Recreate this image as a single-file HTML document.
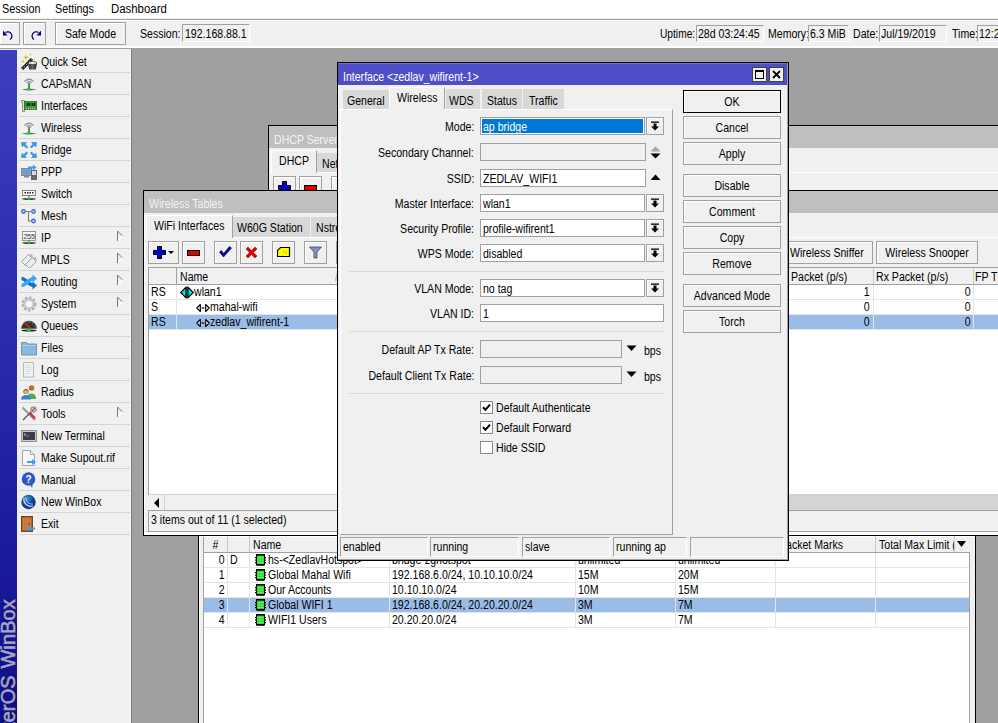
<!DOCTYPE html><html><head><meta charset="utf-8"><style>
html,body{margin:0;padding:0}
body{width:998px;height:723px;overflow:hidden;position:relative;background:#a0a0a0;font-family:"Liberation Sans",sans-serif;font-size:12px;color:#000}
div,span,svg{position:absolute}
.t{white-space:nowrap;line-height:13px;height:13px;transform:scaleX(0.88);transform-origin:0 0}
</style></head><body>
<div style="left:198px;top:520px;width:778px;height:220px;background:#f0f0f0;border-left:1.5px solid #000;border-right:1px solid #000;box-sizing:border-box"></div>
<div style="left:199px;top:536px;width:1px;height:200px;background:#fff"></div>
<div style="left:203px;top:536px;width:767px;height:200px;background:#fff"></div>
<div style="left:203px;top:536px;width:1px;height:200px;background:#a0a0a0"></div>
<div style="left:969px;top:536px;width:1px;height:200px;background:#a0a0a0"></div>
<div style="left:204px;top:536px;width:765px;height:16px;background:#f0f0f0"></div>
<div style="left:204px;top:552px;width:765px;height:1px;background:#a0a0a0"></div>
<div style="left:199px;top:536px;width:776px;height:1px;background:#fff"></div>
<div style="left:227px;top:536px;width:1px;height:16px;background:#c8c8c8"></div>
<div style="left:249px;top:536px;width:1px;height:16px;background:#c8c8c8"></div>
<div style="left:389px;top:536px;width:1px;height:16px;background:#c8c8c8"></div>
<div style="left:575px;top:536px;width:1px;height:16px;background:#c8c8c8"></div>
<div style="left:675px;top:536px;width:1px;height:16px;background:#c8c8c8"></div>
<div style="left:775px;top:536px;width:1px;height:16px;background:#c8c8c8"></div>
<div style="left:875px;top:536px;width:1px;height:16px;background:#c8c8c8"></div>
<div style="left:954px;top:536px;width:1px;height:16px;background:#c8c8c8"></div>
<span class="t" style="left:204px;width:23px;text-align:center;top:539px;transform-origin:50% 0;">#</span>
<span class="t" style="left:253px;top:539px;">Name</span>
<span class="t" style="left:779px;top:539px;">Packet Marks</span>
<span class="t" style="left:879px;top:539px;">Total Max Limit (</span>
<div style="left:954px;top:537px;width:15px;height:15px;background:#f0f0f0;border-left:1px solid #c8c8c8"></div>
<svg style="left:956px;top:540px" width="11" height="8" viewBox="0 0 11 8"><path d="M1 1 h9 l-4.5 6z" fill="#000"/></svg>
<div style="left:204px;top:567px;width:765px;height:1px;background:#e4e4e4"></div>
<div style="left:227px;top:553px;width:1px;height:15px;background:#e4e4e4"></div>
<div style="left:249px;top:553px;width:1px;height:15px;background:#e4e4e4"></div>
<div style="left:389px;top:553px;width:1px;height:15px;background:#e4e4e4"></div>
<div style="left:575px;top:553px;width:1px;height:15px;background:#e4e4e4"></div>
<div style="left:675px;top:553px;width:1px;height:15px;background:#e4e4e4"></div>
<div style="left:775px;top:553px;width:1px;height:15px;background:#e4e4e4"></div>
<div style="left:875px;top:553px;width:1px;height:15px;background:#e4e4e4"></div>
<span class="t" style="right:773px;top:554px;transform-origin:100% 0;">0</span>
<span class="t" style="left:230px;top:554px;">D</span>
<svg style="left:255px;top:554px" width="11" height="12" viewBox="0 0 11 12"><rect x="1.5" y="0.5" width="8" height="10.5" fill="#20e020" stroke="#000" stroke-width="1"/><rect x="2" y="0" width="7" height="1.6" fill="#000"/><rect x="2" y="10" width="7" height="1.6" fill="#000"/><g fill="#000"><rect x="0" y="3" width="2" height="1.2"/><rect x="0" y="5.5" width="2" height="1.2"/><rect x="0" y="8" width="2" height="1.2"/><rect x="9" y="3" width="2" height="1.2"/><rect x="9" y="5.5" width="2" height="1.2"/><rect x="9" y="8" width="2" height="1.2"/></g><path d="M2.5 3.6h6M2.5 6.1h6M2.5 8.6h6" stroke="#90f090" stroke-width="0.8"/></svg>
<span class="t" style="left:268px;top:554px;">hs-&lt;ZedlavHotspot&gt;</span>
<span class="t" style="left:392px;top:554px;">bridge-zghotspot</span>
<span class="t" style="left:578px;top:554px;">unlimited</span>
<span class="t" style="left:678px;top:554px;">unlimited</span>
<div style="left:204px;top:582px;width:765px;height:1px;background:#e4e4e4"></div>
<div style="left:227px;top:568px;width:1px;height:15px;background:#e4e4e4"></div>
<div style="left:249px;top:568px;width:1px;height:15px;background:#e4e4e4"></div>
<div style="left:389px;top:568px;width:1px;height:15px;background:#e4e4e4"></div>
<div style="left:575px;top:568px;width:1px;height:15px;background:#e4e4e4"></div>
<div style="left:675px;top:568px;width:1px;height:15px;background:#e4e4e4"></div>
<div style="left:775px;top:568px;width:1px;height:15px;background:#e4e4e4"></div>
<div style="left:875px;top:568px;width:1px;height:15px;background:#e4e4e4"></div>
<span class="t" style="right:773px;top:569px;transform-origin:100% 0;">1</span>
<svg style="left:255px;top:569px" width="11" height="12" viewBox="0 0 11 12"><rect x="1.5" y="0.5" width="8" height="10.5" fill="#20e020" stroke="#000" stroke-width="1"/><rect x="2" y="0" width="7" height="1.6" fill="#000"/><rect x="2" y="10" width="7" height="1.6" fill="#000"/><g fill="#000"><rect x="0" y="3" width="2" height="1.2"/><rect x="0" y="5.5" width="2" height="1.2"/><rect x="0" y="8" width="2" height="1.2"/><rect x="9" y="3" width="2" height="1.2"/><rect x="9" y="5.5" width="2" height="1.2"/><rect x="9" y="8" width="2" height="1.2"/></g><path d="M2.5 3.6h6M2.5 6.1h6M2.5 8.6h6" stroke="#90f090" stroke-width="0.8"/></svg>
<span class="t" style="left:268px;top:569px;">Global Mahal Wifi</span>
<span class="t" style="left:392px;top:569px;">192.168.6.0/24, 10.10.10.0/24</span>
<span class="t" style="left:578px;top:569px;">15M</span>
<span class="t" style="left:678px;top:569px;">20M</span>
<div style="left:204px;top:597px;width:765px;height:1px;background:#e4e4e4"></div>
<div style="left:227px;top:583px;width:1px;height:15px;background:#e4e4e4"></div>
<div style="left:249px;top:583px;width:1px;height:15px;background:#e4e4e4"></div>
<div style="left:389px;top:583px;width:1px;height:15px;background:#e4e4e4"></div>
<div style="left:575px;top:583px;width:1px;height:15px;background:#e4e4e4"></div>
<div style="left:675px;top:583px;width:1px;height:15px;background:#e4e4e4"></div>
<div style="left:775px;top:583px;width:1px;height:15px;background:#e4e4e4"></div>
<div style="left:875px;top:583px;width:1px;height:15px;background:#e4e4e4"></div>
<span class="t" style="right:773px;top:584px;transform-origin:100% 0;">2</span>
<svg style="left:255px;top:584px" width="11" height="12" viewBox="0 0 11 12"><rect x="1.5" y="0.5" width="8" height="10.5" fill="#20e020" stroke="#000" stroke-width="1"/><rect x="2" y="0" width="7" height="1.6" fill="#000"/><rect x="2" y="10" width="7" height="1.6" fill="#000"/><g fill="#000"><rect x="0" y="3" width="2" height="1.2"/><rect x="0" y="5.5" width="2" height="1.2"/><rect x="0" y="8" width="2" height="1.2"/><rect x="9" y="3" width="2" height="1.2"/><rect x="9" y="5.5" width="2" height="1.2"/><rect x="9" y="8" width="2" height="1.2"/></g><path d="M2.5 3.6h6M2.5 6.1h6M2.5 8.6h6" stroke="#90f090" stroke-width="0.8"/></svg>
<span class="t" style="left:268px;top:584px;">Our Accounts</span>
<span class="t" style="left:392px;top:584px;">10.10.10.0/24</span>
<span class="t" style="left:578px;top:584px;">10M</span>
<span class="t" style="left:678px;top:584px;">15M</span>
<div style="left:204px;top:598px;width:765px;height:14px;background:#9abde8"></div>
<div style="left:204px;top:612px;width:765px;height:1px;background:#e4e4e4"></div>
<div style="left:227px;top:598px;width:1px;height:15px;background:#e4e4e4"></div>
<div style="left:249px;top:598px;width:1px;height:15px;background:#e4e4e4"></div>
<div style="left:389px;top:598px;width:1px;height:15px;background:#e4e4e4"></div>
<div style="left:575px;top:598px;width:1px;height:15px;background:#e4e4e4"></div>
<div style="left:675px;top:598px;width:1px;height:15px;background:#e4e4e4"></div>
<div style="left:775px;top:598px;width:1px;height:15px;background:#e4e4e4"></div>
<div style="left:875px;top:598px;width:1px;height:15px;background:#e4e4e4"></div>
<span class="t" style="right:773px;top:599px;transform-origin:100% 0;">3</span>
<svg style="left:255px;top:599px" width="11" height="12" viewBox="0 0 11 12"><rect x="1.5" y="0.5" width="8" height="10.5" fill="#20e020" stroke="#000" stroke-width="1"/><rect x="2" y="0" width="7" height="1.6" fill="#000"/><rect x="2" y="10" width="7" height="1.6" fill="#000"/><g fill="#000"><rect x="0" y="3" width="2" height="1.2"/><rect x="0" y="5.5" width="2" height="1.2"/><rect x="0" y="8" width="2" height="1.2"/><rect x="9" y="3" width="2" height="1.2"/><rect x="9" y="5.5" width="2" height="1.2"/><rect x="9" y="8" width="2" height="1.2"/></g><path d="M2.5 3.6h6M2.5 6.1h6M2.5 8.6h6" stroke="#90f090" stroke-width="0.8"/></svg>
<span class="t" style="left:268px;top:599px;">Global WIFI 1</span>
<span class="t" style="left:392px;top:599px;">192.168.6.0/24, 20.20.20.0/24</span>
<span class="t" style="left:578px;top:599px;">3M</span>
<span class="t" style="left:678px;top:599px;">7M</span>
<div style="left:204px;top:627px;width:765px;height:1px;background:#e4e4e4"></div>
<div style="left:227px;top:613px;width:1px;height:15px;background:#e4e4e4"></div>
<div style="left:249px;top:613px;width:1px;height:15px;background:#e4e4e4"></div>
<div style="left:389px;top:613px;width:1px;height:15px;background:#e4e4e4"></div>
<div style="left:575px;top:613px;width:1px;height:15px;background:#e4e4e4"></div>
<div style="left:675px;top:613px;width:1px;height:15px;background:#e4e4e4"></div>
<div style="left:775px;top:613px;width:1px;height:15px;background:#e4e4e4"></div>
<div style="left:875px;top:613px;width:1px;height:15px;background:#e4e4e4"></div>
<span class="t" style="right:773px;top:614px;transform-origin:100% 0;">4</span>
<svg style="left:255px;top:614px" width="11" height="12" viewBox="0 0 11 12"><rect x="1.5" y="0.5" width="8" height="10.5" fill="#20e020" stroke="#000" stroke-width="1"/><rect x="2" y="0" width="7" height="1.6" fill="#000"/><rect x="2" y="10" width="7" height="1.6" fill="#000"/><g fill="#000"><rect x="0" y="3" width="2" height="1.2"/><rect x="0" y="5.5" width="2" height="1.2"/><rect x="0" y="8" width="2" height="1.2"/><rect x="9" y="3" width="2" height="1.2"/><rect x="9" y="5.5" width="2" height="1.2"/><rect x="9" y="8" width="2" height="1.2"/></g><path d="M2.5 3.6h6M2.5 6.1h6M2.5 8.6h6" stroke="#90f090" stroke-width="0.8"/></svg>
<span class="t" style="left:268px;top:614px;">WIFI1 Users</span>
<span class="t" style="left:392px;top:614px;">20.20.20.0/24</span>
<span class="t" style="left:578px;top:614px;">3M</span>
<span class="t" style="left:678px;top:614px;">7M</span>
<div style="left:268px;top:125px;width:740px;height:70px;background:#f0f0f0;border:1px solid #000;box-sizing:border-box"></div>
<div style="left:269px;top:126px;width:740px;height:22px;background:#bfbfbf"></div>
<span class="t" style="left:274px;top:134px;color:#f4f4f4">DHCP Server</span>
<div style="left:269px;top:172px;width:740px;height:1px;background:#fff"></div>
<div style="left:271px;top:150px;width:46px;height:23px;background:#f0f0f0;border-top:1px solid #fff;border-left:1px solid #fff;border-right:1px solid #a0a0a0;box-sizing:border-box"></div>
<span class="t" style="left:279px;top:155px;">DHCP</span>
<div style="left:317px;top:153px;width:60px;height:19px;background:#d8d8d8"></div>
<span class="t" style="left:322px;top:158px;">Networks</span>
<div style="left:273px;top:176px;width:23px;height:23px;background:#f0f0f0;border:1px solid #a0a0a0;box-sizing:border-box;box-shadow:inset 1px 1px 0 #fff;"></div>
<div style="left:299px;top:176px;width:23px;height:23px;background:#f0f0f0;border:1px solid #a0a0a0;box-sizing:border-box;box-shadow:inset 1px 1px 0 #fff;"></div>
<div style="left:331px;top:176px;width:23px;height:23px;background:#f0f0f0;border:1px solid #a0a0a0;box-sizing:border-box;box-shadow:inset 1px 1px 0 #fff;"></div>
<svg style="left:278px;top:181px" width="13" height="13" viewBox="0 0 13 13"><path d="M4.5 0.5h4v4h4v4h-4v4h-4v-4h-4v-4h4z" fill="#0000e0" stroke="#000"/></svg>
<svg style="left:304px;top:185px" width="13" height="6" viewBox="0 0 13 6"><rect x="0.5" y="0.5" width="12" height="5" fill="#e00000" stroke="#000"/></svg>
<div style="left:143px;top:190px;width:870px;height:346px;background:#f0f0f0;border-left:1px solid #000;border-top:1px solid #000;border-bottom:1px solid #000;box-sizing:border-box"></div>
<div style="left:144px;top:191px;width:1px;height:344px;background:#fff"></div>
<div style="left:144px;top:191px;width:860px;height:22px;background:#bfbfbf"></div>
<span class="t" style="left:149px;top:198px;color:#f4f4f4">Wireless Tables</span>
<div style="left:144px;top:237px;width:860px;height:1px;background:#fff"></div>
<div style="left:146px;top:215px;width:87px;height:23px;background:#f0f0f0;border-top:1px solid #fff;border-left:1px solid #fff;border-right:1px solid #a0a0a0;box-sizing:border-box"></div>
<span class="t" style="left:154px;top:220px;">WiFi Interfaces</span>
<div style="left:233px;top:217px;width:77px;height:20px;background:#d8d8d8"></div>
<span class="t" style="left:237px;top:222px;">W60G Station</span>
<div style="left:311px;top:217px;width:80px;height:20px;background:#d8d8d8"></div>
<span class="t" style="left:316px;top:222px;">Nstreme Dual</span>
<div style="left:148px;top:241px;width:31px;height:23px;background:#f0f0f0;border:1px solid #a0a0a0;box-sizing:border-box;box-shadow:inset 1px 1px 0 #fff;"></div>
<div style="left:182px;top:241px;width:23px;height:23px;background:#f0f0f0;border:1px solid #a0a0a0;box-sizing:border-box;box-shadow:inset 1px 1px 0 #fff;"></div>
<div style="left:214px;top:241px;width:23px;height:23px;background:#f0f0f0;border:1px solid #a0a0a0;box-sizing:border-box;box-shadow:inset 1px 1px 0 #fff;"></div>
<div style="left:240px;top:241px;width:23px;height:23px;background:#f0f0f0;border:1px solid #a0a0a0;box-sizing:border-box;box-shadow:inset 1px 1px 0 #fff;"></div>
<div style="left:272px;top:241px;width:23px;height:23px;background:#f0f0f0;border:1px solid #a0a0a0;box-sizing:border-box;box-shadow:inset 1px 1px 0 #fff;"></div>
<div style="left:304px;top:241px;width:23px;height:23px;background:#f0f0f0;border:1px solid #a0a0a0;box-sizing:border-box;box-shadow:inset 1px 1px 0 #fff;"></div>
<div style="left:336px;top:241px;width:23px;height:23px;background:#f0f0f0;border:1px solid #a0a0a0;box-sizing:border-box;box-shadow:inset 1px 1px 0 #fff;"></div>
<svg style="left:153px;top:246px" width="22" height="14" viewBox="0 0 22 14"><path d="M4.5 0.5h4v4h4v4h-4v4h-4v-4h-4v-4h4z" fill="#0000e0" stroke="#000"/><path d="M15 5h6l-3 3z" fill="#000"/></svg>
<svg style="left:187px;top:250px" width="13" height="6" viewBox="0 0 13 6"><rect x="0.5" y="0.5" width="12" height="5" fill="#e00000" stroke="#000"/></svg>
<svg style="left:219px;top:246px" width="13" height="12" viewBox="0 0 13 12"><path d="M0.5 6 L4.5 11 L12.5 2 L10.5 0.5 L4.5 7.5 L2.5 4.5z" fill="#0000d0" stroke="#000" stroke-width="0.6"/></svg>
<svg style="left:245px;top:246px" width="13" height="13" viewBox="0 0 13 13"><path d="M1 3 L3 1 L6.5 4.5 L10 1 L12 3 L8.5 6.5 L12 10 L10 12 L6.5 8.5 L3 12 L1 10 L4.5 6.5z" fill="#e00000" stroke="#800" stroke-width="0.5"/></svg>
<svg style="left:277px;top:246px" width="14" height="12" viewBox="0 0 14 12"><path d="M3.5 1.5 h9 v9 h-12 v-6z" fill="#ffff00" stroke="#000" stroke-width="1.2"/><path d="M6 5h5M6 7h5" stroke="#c8c800" stroke-dasharray="1.5 1"/></svg>
<svg style="left:309px;top:246px" width="13" height="13" viewBox="0 0 13 13"><path d="M0.5 1 h12 l-4.5 5 v6 h-3 v-6z" fill="#8890b8" stroke="#404868" stroke-width="0.8"/></svg>
<div style="left:148px;top:267px;width:850px;height:228px;background:#fff;border-top:1px solid #a0a0a0;border-left:1px solid #a0a0a0;box-sizing:border-box"></div>
<div style="left:149px;top:268px;width:850px;height:16px;background:#f0f0f0"></div>
<div style="left:149px;top:284px;width:850px;height:1px;background:#a0a0a0"></div>
<div style="left:176px;top:268px;width:1px;height:16px;background:#a0a0a0"></div>
<span class="t" style="left:180px;top:271px;">Name</span>
<span class="t" style="left:335px;top:271px;color:#999">/</span>
<div style="left:873px;top:268px;width:1px;height:16px;background:#c8c8c8"></div>
<div style="left:973px;top:268px;width:1px;height:16px;background:#c8c8c8"></div>
<span class="t" style="left:791px;top:271px;">Packet (p/s)</span>
<span class="t" style="left:876px;top:271px;">Rx Packet (p/s)</span>
<span class="t" style="left:975px;top:271px;">FP Tx Rate</span>
<div style="left:149px;top:299px;width:850px;height:1px;background:#e4e4e4"></div>
<div style="left:176px;top:285px;width:1px;height:15px;background:#e4e4e4"></div>
<div style="left:873px;top:285px;width:1px;height:15px;background:#e4e4e4"></div>
<div style="left:973px;top:285px;width:1px;height:15px;background:#e4e4e4"></div>
<span class="t" style="left:151px;top:286px;">RS</span>
<svg style="left:180px;top:286px" width="14" height="13" viewBox="0 0 14 13"><path d="M0.7 6.5 L6 1.2 V11.8z M13.3 6.5 L8 1.2 V11.8z" fill="#00e0e8" stroke="#000" stroke-width="1.1" stroke-linejoin="round"/><path d="M7 0.5 V12.5" stroke="#000" stroke-width="1.2"/></svg>
<span class="t" style="left:194px;top:286px;">wlan1</span>
<span class="t" style="right:128px;top:286px;transform-origin:100% 0;">1</span>
<span class="t" style="right:27px;top:286px;transform-origin:100% 0;">0</span>
<div style="left:149px;top:314px;width:850px;height:1px;background:#e4e4e4"></div>
<div style="left:176px;top:300px;width:1px;height:15px;background:#e4e4e4"></div>
<div style="left:873px;top:300px;width:1px;height:15px;background:#e4e4e4"></div>
<div style="left:973px;top:300px;width:1px;height:15px;background:#e4e4e4"></div>
<span class="t" style="left:151px;top:301px;">S</span>
<svg style="left:196px;top:303px" width="14" height="10" viewBox="0 0 14 10"><path d="M0.8 5 L4.3 1.5 V8.5z M13.2 5 L9.7 1.5 V8.5z" fill="#fff" stroke="#000" stroke-width="1.1" stroke-linejoin="round"/><path d="M5.5 5h3" stroke="#000" stroke-width="1.1"/></svg>
<span class="t" style="left:210px;top:301px;">mahal-wifi</span>
<span class="t" style="right:128px;top:301px;transform-origin:100% 0;">0</span>
<span class="t" style="right:27px;top:301px;transform-origin:100% 0;">0</span>
<div style="left:149px;top:315px;width:850px;height:14px;background:#9abde8"></div>
<div style="left:149px;top:329px;width:850px;height:1px;background:#e4e4e4"></div>
<div style="left:176px;top:315px;width:1px;height:15px;background:#e4e4e4"></div>
<div style="left:873px;top:315px;width:1px;height:15px;background:#e4e4e4"></div>
<div style="left:973px;top:315px;width:1px;height:15px;background:#e4e4e4"></div>
<span class="t" style="left:151px;top:316px;">RS</span>
<svg style="left:196px;top:318px" width="14" height="10" viewBox="0 0 14 10"><path d="M0.8 5 L4.3 1.5 V8.5z M13.2 5 L9.7 1.5 V8.5z" fill="#fff" stroke="#000" stroke-width="1.1" stroke-linejoin="round"/><path d="M5.5 5h3" stroke="#000" stroke-width="1.1"/></svg>
<span class="t" style="left:210px;top:316px;">zedlav_wifirent-1</span>
<span class="t" style="right:128px;top:316px;transform-origin:100% 0;">0</span>
<span class="t" style="right:27px;top:316px;transform-origin:100% 0;">0</span>
<div style="left:149px;top:494px;width:850px;height:17px;background:#f0f0f0;border-top:1px solid #d0d0d0;box-sizing:border-box"></div>
<div style="left:600px;top:495px;width:400px;height:16px;background:#d4d4d4"></div>
<div style="left:149px;top:495px;width:16px;height:16px;background:#f0f0f0;border-right:1px solid #d0d0d0;box-sizing:border-box"></div>
<svg style="left:153px;top:498px" width="8" height="10" viewBox="0 0 8 10"><path d="M6 0 L1 5 L6 10z" fill="#000"/></svg>
<div style="left:148px;top:510px;width:850px;height:21px;background:#f0f0f0;border-top:1px solid #a0a0a0;border-left:1px solid #a0a0a0;box-sizing:border-box"></div>
<div style="left:147px;top:531px;width:860px;height:1px;background:#a0a0a0"></div>
<div style="left:144px;top:532px;width:860px;height:3px;background:#fff"></div>
<span class="t" style="left:151px;top:514px;">3 items out of 11 (1 selected)</span>
<div style="left:760px;top:241px;width:113px;height:23px;background:#f0f0f0;border:1px solid #a0a0a0;box-sizing:border-box;box-shadow:inset 1px 1px 0 #fff;"></div>
<span class="t" style="left:790px;top:247px;">Wireless Sniffer</span>
<div style="left:876px;top:241px;width:102px;height:23px;background:#f0f0f0;border:1px solid #a0a0a0;box-sizing:border-box;box-shadow:inset 1px 1px 0 #fff;"></div>
<span class="t" style="left:876px;width:102px;text-align:center;top:247px;transform-origin:50% 0;">Wireless Snooper</span>
<div style="left:337px;top:62px;width:452px;height:499px;background:#f0f0f0;border:1px solid #000;box-sizing:border-box"></div>
<div style="left:787px;top:63px;width:1px;height:497px;background:#a0a0a0"></div>
<div style="left:338px;top:559px;width:450px;height:1px;background:#a0a0a0"></div>
<div style="left:338px;top:63px;width:449px;height:22px;background:#4e4ec8"></div>
<div style="left:338px;top:63px;width:449px;height:1px;background:#6a6ad8"></div>
<span class="t" style="left:343px;top:71px;color:#fff">Interface &lt;zedlav_wifirent-1&gt;</span>
<div style="left:752px;top:67px;width:15px;height:15px;background:#f0f0f0;border:1px solid #404040;box-sizing:border-box"></div>
<div style="left:755px;top:70px;width:9px;height:9px;border:1px solid #000;border-top-width:2px;box-sizing:border-box"></div>
<div style="left:769px;top:67px;width:15px;height:15px;background:#f0f0f0;border:1px solid #404040;box-sizing:border-box"></div>
<svg style="left:772px;top:70px" width="9" height="9" viewBox="0 0 9 9"><path d="M1 1 L8 8 M8 1 L1 8" stroke="#000" stroke-width="1.8"/></svg>
<div style="left:343px;top:90px;width:46px;height:19px;background:#d8d8d8"></div>
<span class="t" style="left:347px;top:95px;">General</span>
<div style="left:389px;top:87px;width:56px;height:23px;background:#f0f0f0;border-top:1px solid #fff;border-left:1px solid #fff;border-right:1px solid #a0a0a0;box-sizing:border-box"></div>
<span class="t" style="left:397px;top:92px;">Wireless</span>
<div style="left:446px;top:89px;width:34px;height:20px;background:#d8d8d8"></div>
<span class="t" style="left:449px;top:95px;">WDS</span>
<div style="left:482px;top:89px;width:40px;height:20px;background:#d8d8d8"></div>
<span class="t" style="left:487px;top:95px;">Status</span>
<div style="left:523px;top:89px;width:41px;height:20px;background:#d8d8d8"></div>
<span class="t" style="left:529px;top:95px;">Traffic</span>
<div style="left:340px;top:109px;width:333px;height:426px;border-top:1px solid #fff;border-left:1px solid #fff;border-right:1px solid #a0a0a0;border-bottom:1px solid #a0a0a0;box-sizing:border-box"></div>
<div style="left:389px;top:109px;width:55px;height:1px;background:#f0f0f0"></div>
<span class="t" style="right:524px;top:121px;transform-origin:100% 0;">Mode:</span>
<div style="left:480px;top:117px;width:165px;height:18px;background:#fff;border:1px solid #a0a0a0;box-sizing:border-box;"></div>
<div style="left:482px;top:119px;width:161px;height:14px;background:#0078d7"></div>
<span class="t" style="left:483px;top:121px;color:#fff">ap bridge</span>
<div style="left:646px;top:117px;width:18px;height:18px;background:#f0f0f0;border:1px solid #a0a0a0;box-sizing:border-box;box-shadow:inset 1px 1px 0 #fff;"></div>
<svg style="left:650px;top:121px" width="10" height="10" viewBox="0 0 10 10"><rect x="1" y="0.5" width="8" height="1.3" fill="#000"/><path d="M3.5 2.5h3v3h2.5l-4 4-4-4h2.5z" fill="#000"/></svg>
<span class="t" style="right:524px;top:147px;transform-origin:100% 0;">Secondary Channel:</span>
<div style="left:480px;top:143px;width:166px;height:18px;background:#f0f0f0;border:1px solid #a0a0a0;box-sizing:border-box;"></div>
<svg style="left:650px;top:146px" width="11" height="13" viewBox="0 0 11 13"><path d="M5.5 0.5 L10.5 5.5 H0.5z" fill="#a0a8a0"/><path d="M0.5 7.5 H10.5 L5.5 12.5z" fill="#000"/></svg>
<span class="t" style="right:524px;top:173px;transform-origin:100% 0;">SSID:</span>
<div style="left:480px;top:169px;width:166px;height:18px;background:#fff;border:1px solid #a0a0a0;box-sizing:border-box;"></div>
<span class="t" style="left:483px;top:173px;">ZEDLAV_WIFI1</span>
<svg style="left:650px;top:174px" width="11" height="7" viewBox="0 0 11 7"><path d="M5.5 0.5 L10.5 6 H0.5z" fill="#000"/></svg>
<span class="t" style="right:524px;top:198px;transform-origin:100% 0;">Master Interface:</span>
<div style="left:480px;top:194px;width:165px;height:18px;background:#fff;border:1px solid #a0a0a0;box-sizing:border-box;"></div>
<span class="t" style="left:483px;top:198px;">wlan1</span>
<div style="left:646px;top:194px;width:18px;height:18px;background:#f0f0f0;border:1px solid #a0a0a0;box-sizing:border-box;box-shadow:inset 1px 1px 0 #fff;"></div>
<svg style="left:650px;top:198px" width="10" height="10" viewBox="0 0 10 10"><rect x="1" y="0.5" width="8" height="1.3" fill="#000"/><path d="M3.5 2.5h3v3h2.5l-4 4-4-4h2.5z" fill="#000"/></svg>
<span class="t" style="right:524px;top:223px;transform-origin:100% 0;">Security Profile:</span>
<div style="left:480px;top:219px;width:165px;height:18px;background:#fff;border:1px solid #a0a0a0;box-sizing:border-box;"></div>
<span class="t" style="left:483px;top:223px;">profile-wifirent1</span>
<div style="left:646px;top:219px;width:18px;height:18px;background:#f0f0f0;border:1px solid #a0a0a0;box-sizing:border-box;box-shadow:inset 1px 1px 0 #fff;"></div>
<svg style="left:650px;top:223px" width="10" height="10" viewBox="0 0 10 10"><rect x="1" y="0.5" width="8" height="1.3" fill="#000"/><path d="M3.5 2.5h3v3h2.5l-4 4-4-4h2.5z" fill="#000"/></svg>
<span class="t" style="right:524px;top:248px;transform-origin:100% 0;">WPS Mode:</span>
<div style="left:480px;top:244px;width:165px;height:18px;background:#fff;border:1px solid #a0a0a0;box-sizing:border-box;"></div>
<span class="t" style="left:483px;top:248px;">disabled</span>
<div style="left:646px;top:244px;width:18px;height:18px;background:#f0f0f0;border:1px solid #a0a0a0;box-sizing:border-box;box-shadow:inset 1px 1px 0 #fff;"></div>
<svg style="left:650px;top:248px" width="10" height="10" viewBox="0 0 10 10"><rect x="1" y="0.5" width="8" height="1.3" fill="#000"/><path d="M3.5 2.5h3v3h2.5l-4 4-4-4h2.5z" fill="#000"/></svg>
<div style="left:349px;top:271px;width:315px;height:1px;background:#d8d8d8"></div>
<span class="t" style="right:524px;top:283px;transform-origin:100% 0;">VLAN Mode:</span>
<div style="left:480px;top:279px;width:165px;height:18px;background:#fff;border:1px solid #a0a0a0;box-sizing:border-box;"></div>
<span class="t" style="left:483px;top:283px;">no tag</span>
<div style="left:646px;top:279px;width:18px;height:18px;background:#f0f0f0;border:1px solid #a0a0a0;box-sizing:border-box;box-shadow:inset 1px 1px 0 #fff;"></div>
<svg style="left:650px;top:283px" width="10" height="10" viewBox="0 0 10 10"><rect x="1" y="0.5" width="8" height="1.3" fill="#000"/><path d="M3.5 2.5h3v3h2.5l-4 4-4-4h2.5z" fill="#000"/></svg>
<span class="t" style="right:524px;top:308px;transform-origin:100% 0;">VLAN ID:</span>
<div style="left:480px;top:304px;width:184px;height:18px;background:#fff;border:1px solid #a0a0a0;box-sizing:border-box;"></div>
<span class="t" style="left:483px;top:308px;">1</span>
<div style="left:349px;top:331px;width:315px;height:1px;background:#d8d8d8"></div>
<span class="t" style="right:524px;top:344px;transform-origin:100% 0;">Default AP Tx Rate:</span>
<div style="left:480px;top:340px;width:142px;height:18px;background:#f0f0f0;border:1px solid #a0a0a0;box-sizing:border-box;"></div>
<svg style="left:626px;top:345px" width="11" height="7" viewBox="0 0 11 7"><path d="M0.5 0.5 H10.5 L5.5 6z" fill="#000"/></svg>
<span class="t" style="left:644px;top:345px;">bps</span>
<span class="t" style="right:524px;top:370px;transform-origin:100% 0;">Default Client Tx Rate:</span>
<div style="left:480px;top:366px;width:142px;height:18px;background:#f0f0f0;border:1px solid #a0a0a0;box-sizing:border-box;"></div>
<svg style="left:626px;top:371px" width="11" height="7" viewBox="0 0 11 7"><path d="M0.5 0.5 H10.5 L5.5 6z" fill="#000"/></svg>
<span class="t" style="left:644px;top:371px;">bps</span>
<div style="left:349px;top:393px;width:315px;height:1px;background:#d8d8d8"></div>
<div style="left:480px;top:401px;width:13px;height:13px;background:#fff;border:1px solid #8a8a8a;box-sizing:border-box"></div>
<svg style="left:482px;top:403px" width="9" height="9" viewBox="0 0 9 9"><path d="M1 4.2 L3.4 6.8 L8 1.6" stroke="#000" stroke-width="2" fill="none"/></svg>
<span class="t" style="left:496px;top:402px;">Default Authenticate</span>
<div style="left:480px;top:421px;width:13px;height:13px;background:#fff;border:1px solid #8a8a8a;box-sizing:border-box"></div>
<svg style="left:482px;top:423px" width="9" height="9" viewBox="0 0 9 9"><path d="M1 4.2 L3.4 6.8 L8 1.6" stroke="#000" stroke-width="2" fill="none"/></svg>
<span class="t" style="left:496px;top:422px;">Default Forward</span>
<div style="left:480px;top:441px;width:13px;height:13px;background:#fff;border:1px solid #8a8a8a;box-sizing:border-box"></div>
<span class="t" style="left:496px;top:442px;">Hide SSID</span>
<div style="left:683px;top:90px;width:98px;height:23px;background:#f0f0f0;border:1px solid #000;box-sizing:border-box;box-shadow:inset 1px 1px 0 #fff"></div>
<span class="t" style="left:683px;width:98px;text-align:center;top:96px;transform-origin:50% 0;">OK</span>
<div style="left:683px;top:116px;width:98px;height:23px;background:#f0f0f0;border:1px solid #a0a0a0;box-sizing:border-box;box-shadow:inset 1px 1px 0 #fff;"></div>
<span class="t" style="left:683px;width:98px;text-align:center;top:122px;transform-origin:50% 0;">Cancel</span>
<div style="left:683px;top:142px;width:98px;height:23px;background:#f0f0f0;border:1px solid #a0a0a0;box-sizing:border-box;box-shadow:inset 1px 1px 0 #fff;"></div>
<span class="t" style="left:683px;width:98px;text-align:center;top:148px;transform-origin:50% 0;">Apply</span>
<div style="left:683px;top:174px;width:98px;height:23px;background:#f0f0f0;border:1px solid #a0a0a0;box-sizing:border-box;box-shadow:inset 1px 1px 0 #fff;"></div>
<span class="t" style="left:683px;width:98px;text-align:center;top:180px;transform-origin:50% 0;">Disable</span>
<div style="left:683px;top:200px;width:98px;height:23px;background:#f0f0f0;border:1px solid #a0a0a0;box-sizing:border-box;box-shadow:inset 1px 1px 0 #fff;"></div>
<span class="t" style="left:683px;width:98px;text-align:center;top:206px;transform-origin:50% 0;">Comment</span>
<div style="left:683px;top:226px;width:98px;height:23px;background:#f0f0f0;border:1px solid #a0a0a0;box-sizing:border-box;box-shadow:inset 1px 1px 0 #fff;"></div>
<span class="t" style="left:683px;width:98px;text-align:center;top:232px;transform-origin:50% 0;">Copy</span>
<div style="left:683px;top:252px;width:98px;height:23px;background:#f0f0f0;border:1px solid #a0a0a0;box-sizing:border-box;box-shadow:inset 1px 1px 0 #fff;"></div>
<span class="t" style="left:683px;width:98px;text-align:center;top:258px;transform-origin:50% 0;">Remove</span>
<div style="left:683px;top:284px;width:98px;height:23px;background:#f0f0f0;border:1px solid #a0a0a0;box-sizing:border-box;box-shadow:inset 1px 1px 0 #fff;"></div>
<span class="t" style="left:683px;width:98px;text-align:center;top:290px;transform-origin:50% 0;">Advanced Mode</span>
<div style="left:683px;top:310px;width:98px;height:23px;background:#f0f0f0;border:1px solid #a0a0a0;box-sizing:border-box;box-shadow:inset 1px 1px 0 #fff;"></div>
<span class="t" style="left:683px;width:98px;text-align:center;top:316px;transform-origin:50% 0;">Torch</span>
<div style="left:340px;top:537px;width:88px;height:20px;background:#f0f0f0;border-style:solid;border-width:1px;border-color:#a0a0a0 #fff #fff #a0a0a0;box-sizing:border-box"></div>
<span class="t" style="left:343px;top:541px;">enabled</span>
<div style="left:430px;top:537px;width:89px;height:20px;background:#f0f0f0;border-style:solid;border-width:1px;border-color:#a0a0a0 #fff #fff #a0a0a0;box-sizing:border-box"></div>
<span class="t" style="left:433px;top:541px;">running</span>
<div style="left:522px;top:537px;width:88px;height:20px;background:#f0f0f0;border-style:solid;border-width:1px;border-color:#a0a0a0 #fff #fff #a0a0a0;box-sizing:border-box"></div>
<span class="t" style="left:525px;top:541px;">slave</span>
<div style="left:613px;top:537px;width:74px;height:20px;background:#f0f0f0;border-style:solid;border-width:1px;border-color:#a0a0a0 #fff #fff #a0a0a0;box-sizing:border-box"></div>
<span class="t" style="left:616px;top:541px;">running ap</span>
<div style="left:690px;top:537px;width:94px;height:20px;background:#f0f0f0;border-style:solid;border-width:1px;border-color:#a0a0a0 #fff #fff #a0a0a0;box-sizing:border-box"></div>
<div style="left:0px;top:0px;width:998px;height:18px;background:#fff"></div>
<div style="left:0px;top:18px;width:998px;height:1px;background:#f0f0f0"></div>
<div style="left:0px;top:19px;width:998px;height:1px;background:#a0a0a0"></div>
<div style="left:0px;top:20px;width:998px;height:26px;background:#f0f0f0"></div>
<div style="left:0px;top:20px;width:998px;height:1px;background:#fff"></div>
<div style="left:0px;top:46px;width:998px;height:2px;background:#fff"></div>
<div style="left:0px;top:48px;width:998px;height:1px;background:#a0a0a0"></div>
<span class="t" style="left:2px;top:3px;transform:scaleX(0.9)">Session</span>
<span class="t" style="left:55px;top:3px;transform:scaleX(0.9)">Settings</span>
<span class="t" style="left:111px;top:3px;transform:scaleX(0.95)">Dashboard</span>
<div style="left:-1px;top:22px;width:21px;height:23px;background:#f0f0f0;border:1px solid #a0a0a0;box-sizing:border-box;box-shadow:inset 1px 1px 0 #fff;"></div>
<div style="left:23px;top:22px;width:23px;height:23px;background:#f0f0f0;border:1px solid #a0a0a0;box-sizing:border-box;box-shadow:inset 1px 1px 0 #fff;"></div>
<svg style="left:2px;top:28px" width="14" height="13" viewBox="0 0 14 13"><path d="M3.5 4.5 A4 4 0 1 1 8 11.5" fill="none" stroke="#000080" stroke-width="1.3"/><path d="M1 2.5 L1 7.5 L5.5 7.5 Z" fill="#000080"/></svg>
<svg style="left:28px;top:28px" width="14" height="13" viewBox="0 0 14 13"><path d="M10.5 4.5 A4 4 0 1 0 6 11.5" fill="none" stroke="#000080" stroke-width="1.3"/><path d="M13 2.5 L13 7.5 L8.5 7.5 Z" fill="#000080"/></svg>
<div style="left:55px;top:22px;width:71px;height:23px;background:#f0f0f0;border:1px solid #a0a0a0;box-sizing:border-box;box-shadow:inset 1px 1px 0 #fff;"></div>
<span class="t" style="left:55px;width:71px;text-align:center;top:28px;transform-origin:50% 0;">Safe Mode</span>
<span class="t" style="left:140px;top:28px;">Session:</span>
<div style="left:182px;top:24px;width:68px;height:18px;background:#f0f0f0;border-style:solid;border-width:1px;border-color:#a0a0a0 #fff #fff #a0a0a0;box-sizing:border-box"></div>
<span class="t" style="left:185px;top:28px;">192.168.88.1</span>
<span class="t" style="left:660px;top:28px;transform:scaleX(0.85)">Uptime:</span>
<div style="left:696px;top:25px;width:68px;height:17px;background:#f0f0f0;border-style:solid;border-width:1px;border-color:#a0a0a0 #fff #fff #a0a0a0;box-sizing:border-box"></div>
<span class="t" style="left:698px;top:28px;">28d 03:24:45</span>
<span class="t" style="left:768px;top:28px;">Memory:</span>
<div style="left:808px;top:25px;width:41px;height:17px;background:#f0f0f0;border-style:solid;border-width:1px;border-color:#a0a0a0 #fff #fff #a0a0a0;box-sizing:border-box"></div>
<span class="t" style="left:810px;top:28px;">6.3 MiB</span>
<span class="t" style="left:853px;top:28px;">Date:</span>
<div style="left:879px;top:25px;width:68px;height:17px;background:#f0f0f0;border-style:solid;border-width:1px;border-color:#a0a0a0 #fff #fff #a0a0a0;box-sizing:border-box"></div>
<span class="t" style="left:881px;top:28px;">Jul/19/2019</span>
<span class="t" style="left:952px;top:28px;">Time:</span>
<div style="left:977px;top:25px;width:40px;height:17px;background:#f0f0f0;border-style:solid;border-width:1px;border-color:#a0a0a0 #fff #fff #a0a0a0;box-sizing:border-box"></div>
<span class="t" style="left:979px;top:28px;">12:24:10</span>
<div style="left:0px;top:49px;width:131px;height:674px;background:#f0f0f0"></div>
<div style="left:0px;top:50px;width:17px;height:673px;background:linear-gradient(to bottom,#3d3dc0 0%,#2c2cb0 40%,#1a1a9c 75%,#0f0f88 100%)"></div>
<div style="left:131px;top:49px;width:1px;height:674px;background:#7a7a7a"></div>
<div style="left:130px;top:49px;width:1px;height:674px;background:#fafafa"></div>
<span class="t" style="left:-42px;top:705px;width:100px;height:20px;line-height:20px;transform:rotate(-90deg);transform-origin:50% 50%;font-size:20px;font-weight:normal;letter-spacing:0.1px;word-spacing:1px;color:#a4a4cc;-webkit-text-stroke:0.6px #a4a4cc;text-shadow:0.5px 1px 1px rgba(0,0,40,0.9);white-space:nowrap">RouterOS WinBox</span>
<div style="left:19px;top:72px;width:111px;height:1px;background:#d4d4d4"></div>
<svg style="left:21px;top:54px" width="16" height="16" viewBox="0 0 16 16"><defs><linearGradient id="hat" x1="0" x2="1"><stop offset="0" stop-color="#222"/><stop offset="0.5" stop-color="#666"/><stop offset="1" stop-color="#222"/></linearGradient></defs><path d="M1 15 L11 5" stroke="#111" stroke-width="3"/><path d="M1.5 14.5 L10.5 5.5" stroke="#eee" stroke-width="1" stroke-dasharray="1.2 1.2"/><path d="M7 9 h9 l-1.2 6.5 h-6.6z" fill="url(#hat)"/><ellipse cx="11.5" cy="9" rx="4.5" ry="1.4" fill="#fff" stroke="#333" stroke-width="0.8"/><path d="M11 3.5 L13 1.5" stroke="#fff" stroke-width="2"/><path d="M5 0.5 l0.9 1.9 1.9 0.9 -1.9 0.9 -0.9 1.9 -0.9 -1.9 -1.9 -0.9 1.9 -0.9z" fill="#d8c030"/><path d="M2 5.5 l0.6 1.2 1.2 0.6 -1.2 0.6 -0.6 1.2 -0.6 -1.2 -1.2 -0.6 1.2 -0.6z" fill="#d8c030"/><circle cx="9.5" cy="0.8" r="0.8" fill="#d8c030"/><circle cx="13.5" cy="6" r="0.7" fill="#d8c030"/></svg>
<span class="t" style="left:41px;top:56px;">Quick Set</span>
<div style="left:19px;top:94px;width:111px;height:1px;background:#d4d4d4"></div>
<svg style="left:21px;top:76px" width="16" height="16" viewBox="0 0 16 16"><defs><radialGradient id="sh"><stop offset="0" stop-color="#000"/><stop offset="1" stop-color="#000" stop-opacity="0.1"/></radialGradient></defs><path d="M3.5 5.5 Q8 1 12.5 5.5" fill="none" stroke="#999" stroke-width="1.3"/><path d="M5.5 7 Q8 4.5 10.5 7" fill="none" stroke="#999" stroke-width="1.2"/><rect x="7" y="7" width="2" height="6" fill="#777"/><ellipse cx="8" cy="13.6" rx="7.5" ry="1.1" fill="url(#sh)"/><ellipse cx="8" cy="13.2" rx="2.2" ry="1.4" fill="#2c2"/></svg>
<span class="t" style="left:41px;top:78px;">CAPsMAN</span>
<div style="left:19px;top:116px;width:111px;height:1px;background:#d4d4d4"></div>
<svg style="left:21px;top:98px" width="16" height="16" viewBox="0 0 16 16"><path d="M0.5 2.5 h3 v11 h-2 v-9 h-1z" fill="#ddd" stroke="#777" stroke-width="0.8"/><rect x="3.5" y="3.5" width="12.5" height="8" fill="#3c9c3c" stroke="#2a6a2a" stroke-width="0.8"/><rect x="5.5" y="5" width="4" height="3" fill="#164016"/><rect x="10.5" y="5" width="4" height="3" fill="#164016"/><path d="M5 10.5h10" stroke="#d8c040" stroke-width="1.5" stroke-dasharray="1 1"/></svg>
<span class="t" style="left:41px;top:100px;">Interfaces</span>
<div style="left:19px;top:138px;width:111px;height:1px;background:#d4d4d4"></div>
<svg style="left:21px;top:120px" width="16" height="16" viewBox="0 0 16 16"><defs><radialGradient id="sh"><stop offset="0" stop-color="#000"/><stop offset="1" stop-color="#000" stop-opacity="0.1"/></radialGradient></defs><path d="M3.5 5.5 Q8 1 12.5 5.5" fill="none" stroke="#999" stroke-width="1.3"/><path d="M5.5 7 Q8 4.5 10.5 7" fill="none" stroke="#999" stroke-width="1.2"/><rect x="7" y="7" width="2" height="6" fill="#777"/><ellipse cx="8" cy="13.6" rx="7.5" ry="1.1" fill="url(#sh)"/><ellipse cx="8" cy="13.2" rx="2.2" ry="1.4" fill="#2c2"/></svg>
<span class="t" style="left:41px;top:122px;">Wireless</span>
<div style="left:19px;top:160px;width:111px;height:1px;background:#d4d4d4"></div>
<svg style="left:21px;top:142px" width="16" height="16" viewBox="0 0 16 16"><g fill="#2aa0f0" stroke="#1a78c8" stroke-width="0.5"><path d="M0.5 0.5h5l-1.6 1.6 2.8 2.8-1.2 1.2-2.8-2.8-1.6 1.6z"/><path d="M15.5 0.5h-5l1.6 1.6-2.8 2.8 1.2 1.2 2.8-2.8 1.6 1.6z"/><path d="M0.5 15.5h5l-1.6-1.6 2.8-2.8-1.2-1.2-2.8 2.8-1.6-1.6z"/><path d="M15.5 15.5h-5l1.6-1.6-2.8-2.8 1.2-1.2 2.8 2.8 1.6-1.6z"/></g><g fill="#2aa0f0"><path d="M7 7 L4.5 4.5 L6 4.5z"/></g></svg>
<span class="t" style="left:41px;top:144px;">Bridge</span>
<div style="left:19px;top:182px;width:111px;height:1px;background:#d4d4d4"></div>
<svg style="left:21px;top:164px" width="16" height="16" viewBox="0 0 16 16"><rect x="0.5" y="4.5" width="10" height="7" fill="#aaa" stroke="#777" stroke-width="0.8"/><rect x="1.5" y="5.5" width="8" height="5" fill="#5aa0e0"/><rect x="3" y="11.5" width="5" height="2" fill="#888"/><rect x="10" y="6" width="6" height="10" fill="#666"/><rect x="11" y="7" width="4" height="4" fill="#ddd"/><circle cx="13" cy="13.5" r="0.8" fill="#2c2"/><path d="M7 3.5 h6" stroke="#3a9ef0" stroke-width="2"/><path d="M12 0.5 l3.5 3 -3.5 3z" fill="#3a9ef0"/></svg>
<span class="t" style="left:41px;top:166px;">PPP</span>
<div style="left:19px;top:204px;width:111px;height:1px;background:#d4d4d4"></div>
<svg style="left:21px;top:186px" width="16" height="16" viewBox="0 0 16 16"><rect x="1.5" y="4.5" width="13" height="5" fill="#fafafa" stroke="#777" stroke-width="0.9"/><g fill="#222"><rect x="3.5" y="6" width="1.5" height="1.5"/><rect x="6" y="6" width="1.5" height="1.5"/><rect x="8.5" y="6" width="1.5" height="1.5"/><rect x="11" y="6" width="1.5" height="1.5"/></g><rect x="7.5" y="9.5" width="1" height="3" fill="#777"/><ellipse cx="8" cy="13" rx="7" ry="0.9" fill="#444"/><ellipse cx="8" cy="12.6" rx="1.6" ry="1.2" fill="#2c2"/></svg>
<span class="t" style="left:41px;top:188px;">Switch</span>
<div style="left:19px;top:226px;width:111px;height:1px;background:#d4d4d4"></div>
<svg style="left:21px;top:208px" width="16" height="16" viewBox="0 0 16 16"><g fill="#b8c8f0" stroke="#3a5ed8" stroke-width="1.2"><circle cx="2.5" cy="3.5" r="1.8"/><circle cx="12.5" cy="3.5" r="1.8"/><circle cx="12.5" cy="13" r="1.8"/></g><path d="M4.5 3.5 h6 M7.5 3.5 v9.5 h3" stroke="#777" fill="none" stroke-width="1.1"/></svg>
<span class="t" style="left:41px;top:210px;">Mesh</span>
<div style="left:19px;top:248px;width:111px;height:1px;background:#d4d4d4"></div>
<svg style="left:21px;top:230px" width="16" height="16" viewBox="0 0 16 16"><rect x="1.5" y="1.5" width="13" height="9" fill="#f8f8f8" stroke="#888" stroke-width="0.9"/><text x="8" y="8.8" font-size="7.5" text-anchor="middle" font-family="Liberation Sans" fill="#333" letter-spacing="-0.3">255</text><rect x="7.5" y="10.5" width="1" height="2" fill="#777"/><ellipse cx="8" cy="13" rx="7" ry="0.9" fill="#444"/><ellipse cx="8" cy="12.6" rx="1.6" ry="1.2" fill="#2c2"/></svg>
<span class="t" style="left:41px;top:232px;">IP</span>
<svg style="left:116px;top:230px" width="8" height="12" viewBox="0 0 8 12"><path d="M6.5 6 L1.5 11" stroke="#fff" stroke-width="1.2" fill="none"/><path d="M1.5 1 V11 M1.5 1 L6.3 5.8" stroke="#777" stroke-width="1" fill="none"/></svg>
<div style="left:19px;top:270px;width:111px;height:1px;background:#d4d4d4"></div>
<svg style="left:21px;top:252px" width="16" height="16" viewBox="0 0 16 16"><g fill="#e4f0ee" stroke="#999" stroke-width="0.9"><path d="M0.5 9.5 L7 3 L11 3 L11 7 L4.5 13.5 Z"/><path d="M4.5 12.5 L11 6 L15 6 L15 10 L8.5 16.5 Z"/></g><circle cx="9.5" cy="4.5" r="0.7" fill="#888"/><circle cx="13.5" cy="7.5" r="0.7" fill="#888"/></svg>
<span class="t" style="left:41px;top:254px;">MPLS</span>
<svg style="left:116px;top:252px" width="8" height="12" viewBox="0 0 8 12"><path d="M6.5 6 L1.5 11" stroke="#fff" stroke-width="1.2" fill="none"/><path d="M1.5 1 V11 M1.5 1 L6.3 5.8" stroke="#777" stroke-width="1" fill="none"/></svg>
<div style="left:19px;top:292px;width:111px;height:1px;background:#d4d4d4"></div>
<svg style="left:21px;top:274px" width="16" height="16" viewBox="0 0 16 16"><path d="M0.5 4.5 C5 4.5 8 11.5 13 11.5" stroke="#1a70c0" stroke-width="3.5" fill="none"/><path d="M0.5 11.5 C5 11.5 8 4.5 13 4.5" stroke="#3aa6f8" stroke-width="3.5" fill="none"/><path d="M11.5 0.5 l4.5 4 -4.5 4z" fill="#3aa6f8"/><path d="M11.5 7.5 l4.5 4 -4.5 4z" fill="#1a70c0"/></svg>
<span class="t" style="left:41px;top:276px;">Routing</span>
<svg style="left:116px;top:274px" width="8" height="12" viewBox="0 0 8 12"><path d="M6.5 6 L1.5 11" stroke="#fff" stroke-width="1.2" fill="none"/><path d="M1.5 1 V11 M1.5 1 L6.3 5.8" stroke="#777" stroke-width="1" fill="none"/></svg>
<div style="left:19px;top:314px;width:111px;height:1px;background:#d4d4d4"></div>
<svg style="left:21px;top:296px" width="16" height="16" viewBox="0 0 16 16"><circle cx="8" cy="8" r="5.8" fill="none" stroke="#a8a8a8" stroke-width="3.2" stroke-dasharray="2.3 1.5"/><circle cx="8" cy="8" r="4.6" fill="none" stroke="#c4c4c4" stroke-width="2.2"/><circle cx="8" cy="8" r="2" fill="#f8f8f8"/></svg>
<span class="t" style="left:41px;top:298px;">System</span>
<svg style="left:116px;top:296px" width="8" height="12" viewBox="0 0 8 12"><path d="M6.5 6 L1.5 11" stroke="#fff" stroke-width="1.2" fill="none"/><path d="M1.5 1 V11 M1.5 1 L6.3 5.8" stroke="#777" stroke-width="1" fill="none"/></svg>
<div style="left:19px;top:336px;width:111px;height:1px;background:#d4d4d4"></div>
<svg style="left:21px;top:318px" width="16" height="16" viewBox="0 0 16 16"><path d="M0.5 10.5 A7.5 7.5 0 0 1 15.5 10.5 Z" fill="#333" stroke="#555" stroke-width="0.6"/><path d="M3 4 L9 10" stroke="#e02828" stroke-width="1.3"/><g fill="#888"><circle cx="8" cy="4.5" r="0.6"/><circle cx="11.5" cy="5.5" r="0.6"/><circle cx="13.5" cy="8.5" r="0.6"/></g><ellipse cx="8" cy="12.5" rx="7.5" ry="1" fill="#222"/><ellipse cx="8" cy="12.2" rx="2" ry="1.3" fill="#2c2"/></svg>
<span class="t" style="left:41px;top:320px;">Queues</span>
<div style="left:19px;top:358px;width:111px;height:1px;background:#d4d4d4"></div>
<svg style="left:21px;top:340px" width="16" height="16" viewBox="0 0 16 16"><path d="M0.5 2.5 h5 l1.5 1.5 h8.5 v11 h-15z" fill="#8ab8e0" stroke="#6a8aa8" stroke-width="0.9"/><path d="M0.5 5.5 h15" stroke="#a8d0f0"/></svg>
<span class="t" style="left:41px;top:342px;">Files</span>
<div style="left:19px;top:380px;width:111px;height:1px;background:#d4d4d4"></div>
<svg style="left:21px;top:362px" width="16" height="16" viewBox="0 0 16 16"><path d="M2.5 0.5 h10 v15 l-1.25 -1 -1.25 1 -1.25 -1 -1.25 1 -1.25 -1 -1.25 1 -1.25 -1 -1.25 1z" fill="#eef6f2" stroke="#aaa" stroke-width="0.8"/><g stroke="#b8c0c8" stroke-width="0.7" stroke-dasharray="1 0.6"><path d="M4.5 3.5h5M4.5 5.5h6M4.5 7.5h6M4.5 9.5h6M4.5 11.5h4"/></g></svg>
<span class="t" style="left:41px;top:364px;">Log</span>
<div style="left:19px;top:402px;width:111px;height:1px;background:#d4d4d4"></div>
<svg style="left:21px;top:384px" width="16" height="16" viewBox="0 0 16 16"><circle cx="10.5" cy="4" r="2.8" fill="#c06838"/><path d="M6 14 a4.5 4.5 0 0 1 9 0 v1h-9z" fill="#48b048"/><circle cx="5" cy="7.5" r="2.6" fill="#704020"/><circle cx="5" cy="8" r="2" fill="#e8b080"/><path d="M0 15.5 a5 4.5 0 0 1 10 0z" fill="#3a80d0"/></svg>
<span class="t" style="left:41px;top:386px;">Radius</span>
<div style="left:19px;top:424px;width:111px;height:1px;background:#d4d4d4"></div>
<svg style="left:21px;top:406px" width="16" height="16" viewBox="0 0 16 16"><path d="M1.5 1.5 L14 14" stroke="#999" stroke-width="2"/><path d="M14.5 1.5 L2 14" stroke="#555" stroke-width="1.2"/><path d="M9 7 L14 12.5" stroke="#e03030" stroke-width="2.6"/><circle cx="12.5" cy="3.5" r="2.5" fill="none" stroke="#999" stroke-width="1.5"/></svg>
<span class="t" style="left:41px;top:408px;">Tools</span>
<svg style="left:116px;top:406px" width="8" height="12" viewBox="0 0 8 12"><path d="M6.5 6 L1.5 11" stroke="#fff" stroke-width="1.2" fill="none"/><path d="M1.5 1 V11 M1.5 1 L6.3 5.8" stroke="#777" stroke-width="1" fill="none"/></svg>
<div style="left:19px;top:446px;width:111px;height:1px;background:#d4d4d4"></div>
<svg style="left:21px;top:428px" width="16" height="16" viewBox="0 0 16 16"><rect x="0.5" y="2.5" width="15" height="11" fill="#ccc" stroke="#888" stroke-width="0.9"/><rect x="2" y="4" width="12" height="8" fill="#3a3a48"/><path d="M3 5.5 l2 1 -2 1 M5.5 8 h2" stroke="#ddd" stroke-width="0.7" fill="none"/></svg>
<span class="t" style="left:41px;top:430px;">New Terminal</span>
<div style="left:19px;top:468px;width:111px;height:1px;background:#d4d4d4"></div>
<svg style="left:21px;top:450px" width="16" height="16" viewBox="0 0 16 16"><path d="M1.5 0.5 h8 l4 4 v11 h-12z" fill="#f4fafc" stroke="#999" stroke-width="0.9"/><path d="M9.5 0.5 v4 h4" fill="#e0e8ee" stroke="#999" stroke-width="0.8"/><path d="M6 12 h6" stroke="#3aa0f0" stroke-width="2"/><path d="M11 9 l4 3 -4 3z" fill="#3aa0f0"/></svg>
<span class="t" style="left:41px;top:452px;">Make Supout.rif</span>
<div style="left:19px;top:490px;width:111px;height:1px;background:#d4d4d4"></div>
<svg style="left:21px;top:472px" width="16" height="16" viewBox="0 0 16 16"><circle cx="7.5" cy="7" r="6.8" fill="#2a58c8"/><path d="M9 12 l2 4 1-5z" fill="#2a58c8"/><text x="7.5" y="11" font-size="10" font-weight="bold" text-anchor="middle" font-family="Liberation Sans" fill="#fff">?</text></svg>
<span class="t" style="left:41px;top:474px;">Manual</span>
<div style="left:19px;top:512px;width:111px;height:1px;background:#d4d4d4"></div>
<svg style="left:21px;top:494px" width="16" height="16" viewBox="0 0 16 16"><defs><radialGradient id="wb" cx="0.4" cy="0.3"><stop offset="0" stop-color="#4a90e0"/><stop offset="1" stop-color="#0a3a8a"/></radialGradient></defs><circle cx="7.5" cy="8" r="7.2" fill="url(#wb)"/><path d="M3 4 A7 7 0 0 0 12 12" stroke="#c8e0f8" stroke-width="1.2" fill="none"/><path d="M5 3 A6 6 0 0 0 12 10" stroke="#c8e0f8" stroke-width="0.8" fill="none"/></svg>
<span class="t" style="left:41px;top:496px;">New WinBox</span>
<div style="left:19px;top:534px;width:111px;height:1px;background:#d4d4d4"></div>
<svg style="left:21px;top:516px" width="16" height="16" viewBox="0 0 16 16"><rect x="0.5" y="0.5" width="11" height="15" fill="#b06028" stroke="#703810" stroke-width="0.9"/><rect x="2" y="2" width="8" height="12" fill="#d08040"/><path d="M4 2v12M6 2v12M8 2v12" stroke="#b06028" stroke-width="0.5"/><circle cx="8.5" cy="8" r="0.7" fill="#333"/><path d="M6 12.5 h8" stroke="#3aa0f0" stroke-width="2"/><path d="M8.5 9.5 l-3.5 3 3.5 3z" fill="#3aa0f0"/></svg>
<span class="t" style="left:41px;top:518px;">Exit</span>
</body></html>
